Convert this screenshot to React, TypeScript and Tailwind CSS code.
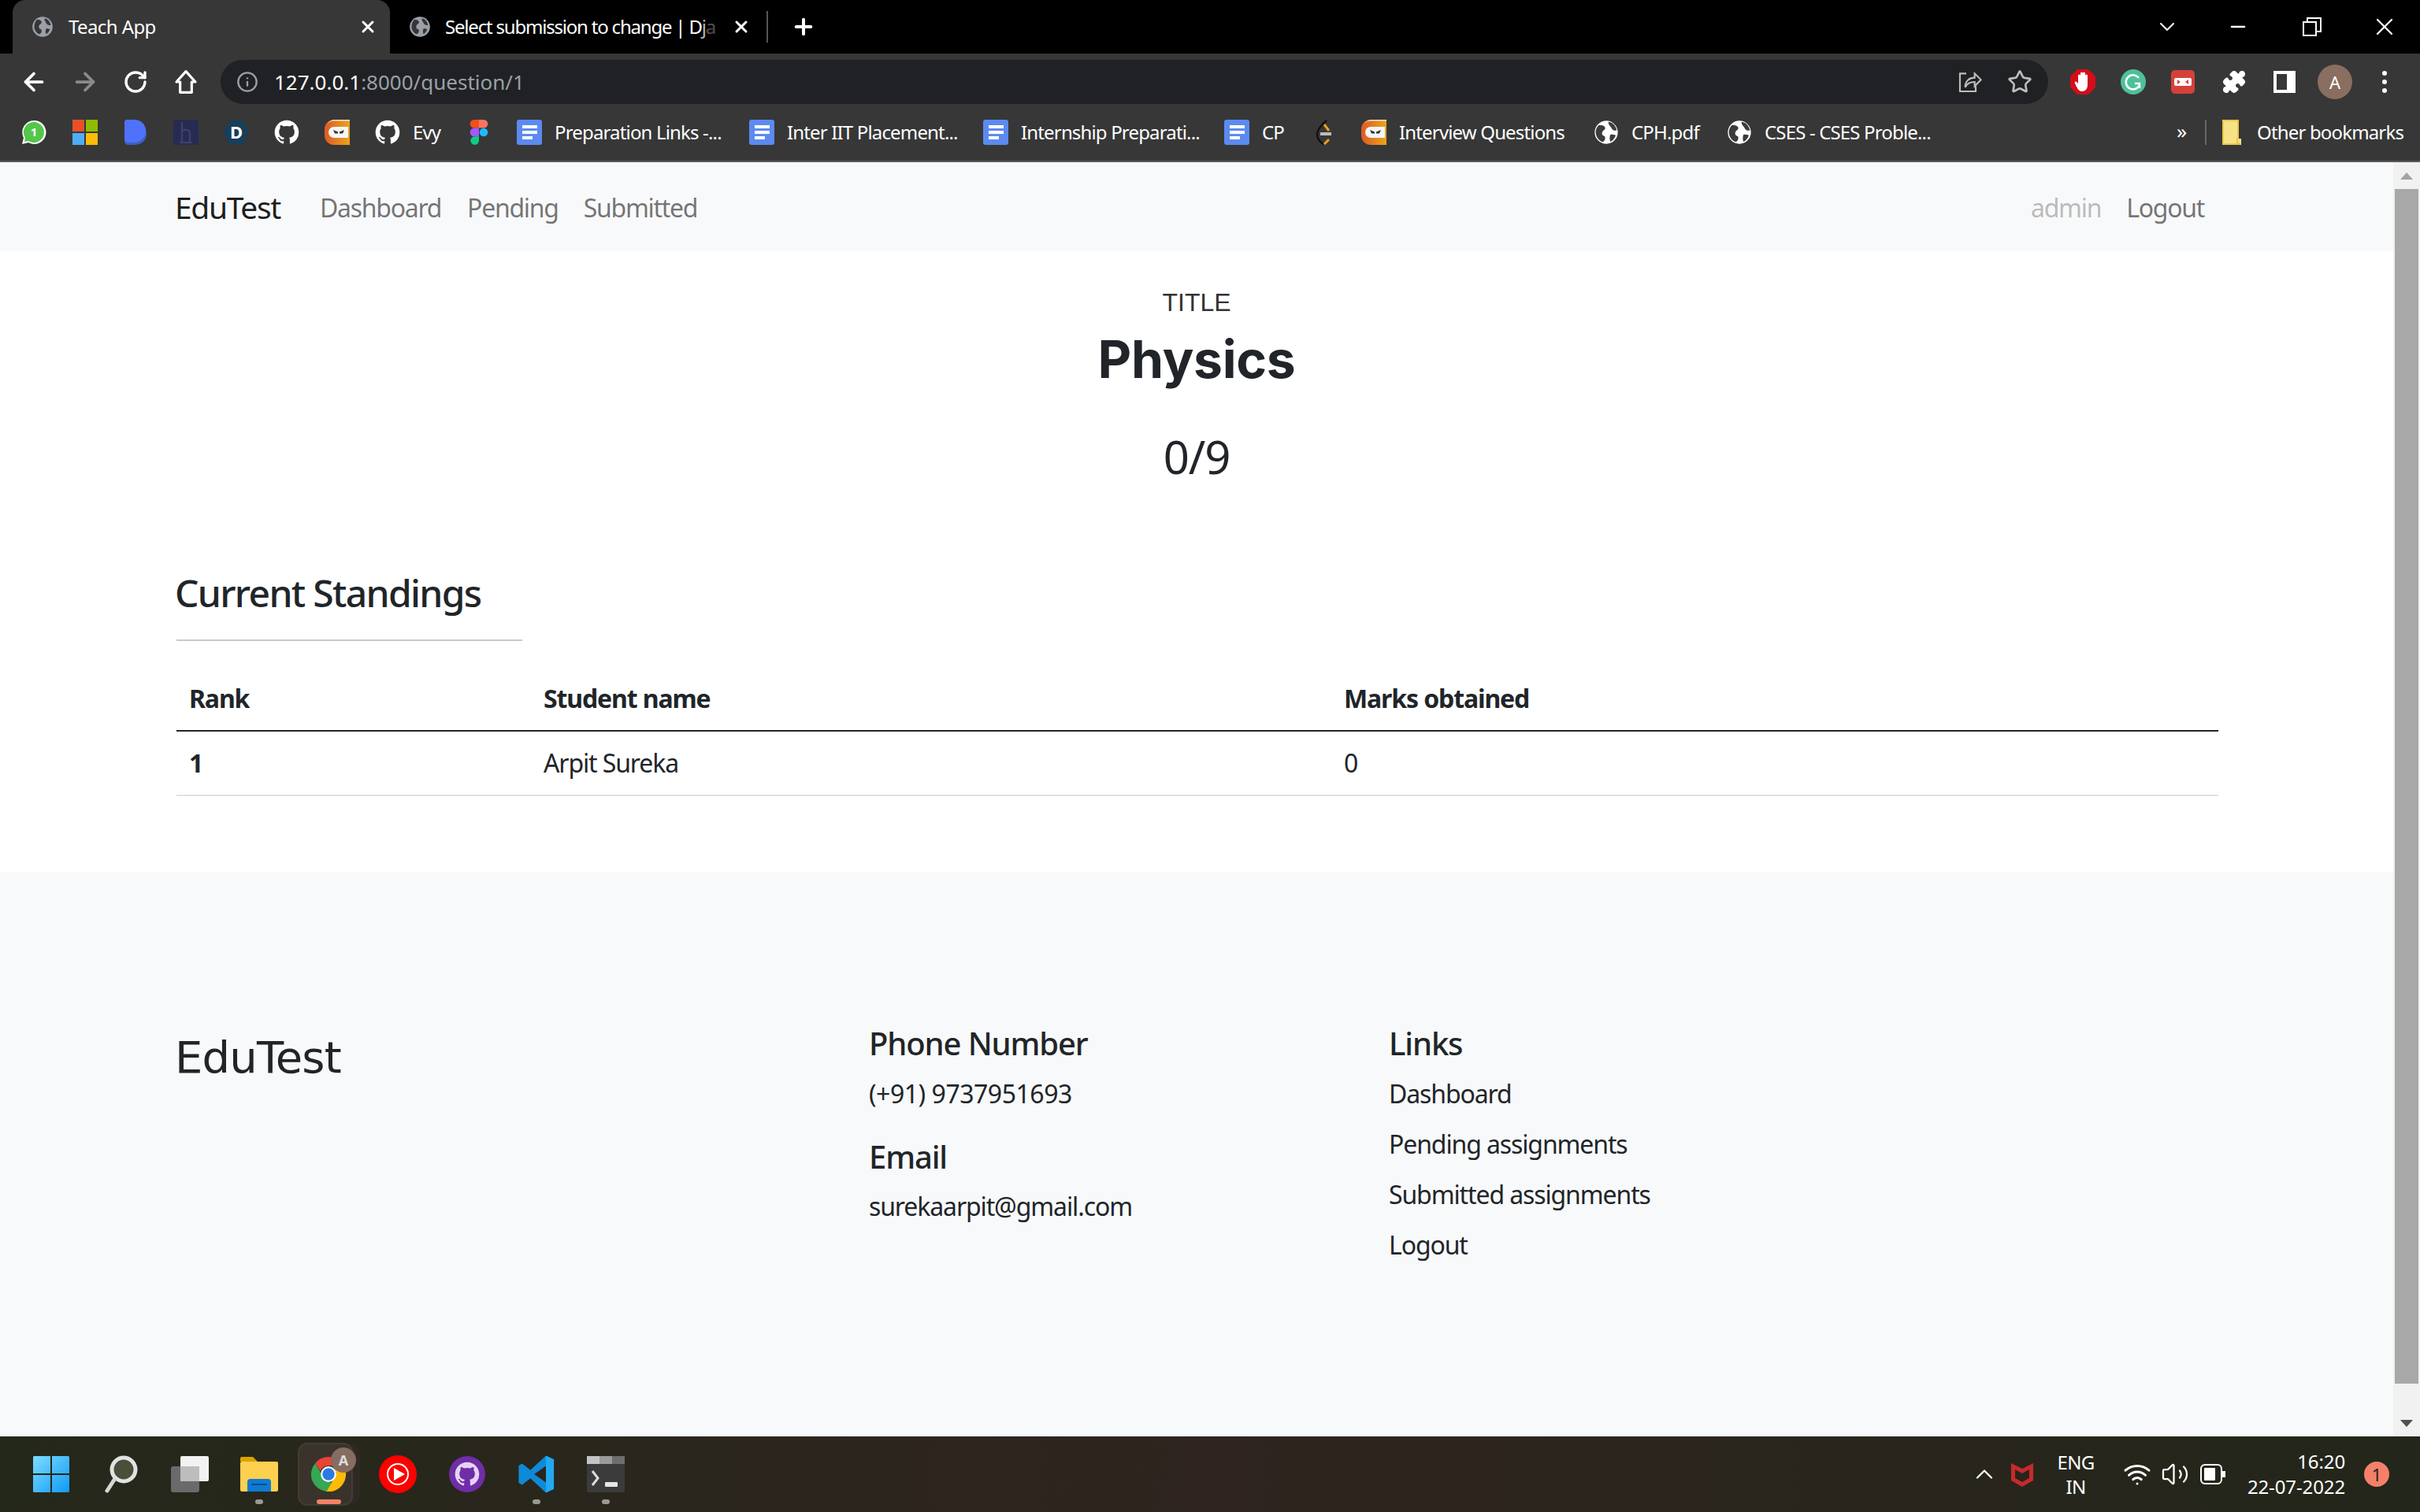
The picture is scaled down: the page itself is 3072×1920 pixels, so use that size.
import React from 'react';
import { ArrowLeft, ArrowRight, RotateCw, Info, Star, Plus, X, ChevronDown, ChevronUp, Minus, Puzzle, Wifi, Volume2 } from 'lucide-react';

const segoe = "font-['Noto_Sans','Open_Sans',sans-serif]";

const Globe = ({ className = 'w-8 h-8' }: { className?: string }) => (
  <svg className={className} viewBox="0 0 24 24">
    <circle cx="12" cy="12" r="11" fill="#fff" />
    <path d="M5 5c3 0 6 1 6 3s-3 2-3 5 3 2 3 4-1 4-3 4c-3-1-6-5-6-9 0-3 1-5 3-7zM14 2c3 0 7 3 8 8-2 1-4 0-5-2s-3-3-3-6zM16 14c2 0 4 0 5 1-1 3-3 5-5 6-1-2-1-5 0-7z" fill="#3c3c3c" />
  </svg>
);

const TabGlobe = () => (
  <svg className="w-7 h-7 shrink-0" viewBox="0 0 24 24">
    <circle cx="12" cy="12" r="11" fill="#9aa0a6" />
    <path d="M6 4c3 0 5 1 5 3s-3 2-3 5 3 2 3 4-1 4-3 4c-2-1-5-4-5-8 0-3 1-6 3-8zM14 3c3 0 6 3 7 7-2 1-4 0-5-2s-2-3-2-5zM16 14c2 0 3 0 4 1-1 2-2 4-4 5-1-2-1-4 0-6z" fill="#35363a" />
  </svg>
);

const Docs = () => (
  <svg className="w-8 h-8" viewBox="0 0 32 32">
    <rect x="0" y="0" width="32" height="32" rx="3" fill="#5c8af0" />
    <rect x="7" y="7" width="19" height="4" fill="#fff" />
    <rect x="7" y="14" width="19" height="4" fill="#fff" />
    <rect x="7" y="21" width="13" height="4" fill="#fff" />
  </svg>
);

const Github = ({ className = 'w-8 h-8', fill = '#fff' }: { className?: string; fill?: string }) => (
  <svg className={className} viewBox="0 0 24 24" fill={fill}>
    <path d="M12 .5C5.65.5.5 5.65.5 12c0 5.08 3.29 9.39 7.86 10.91.58.11.79-.25.79-.55v-2.14c-3.2.7-3.87-1.36-3.87-1.36-.52-1.33-1.28-1.68-1.28-1.68-1.05-.71.08-.7.08-.7 1.15.08 1.76 1.19 1.76 1.19 1.03 1.76 2.69 1.25 3.34.96.1-.74.4-1.25.73-1.54-2.55-.29-5.24-1.28-5.24-5.69 0-1.26.45-2.28 1.19-3.09-.12-.29-.52-1.46.11-3.05 0 0 .97-.31 3.17 1.18a11 11 0 0 1 5.76 0c2.2-1.49 3.17-1.18 3.17-1.18.63 1.59.23 2.76.11 3.05.74.81 1.19 1.83 1.19 3.09 0 4.42-2.69 5.39-5.25 5.68.41.36.78 1.06.78 2.14v3.17c0 .31.21.67.8.55A11.51 11.51 0 0 0 23.5 12C23.5 5.65 18.35.5 12 .5z" />
  </svg>
);

const Ninja = ({ id }: { id: string }) => (
  <svg className="w-8 h-8" viewBox="0 0 32 32">
    <defs>
      <linearGradient id={id} x1="0" y1="0" x2="1" y2="0">
        <stop offset="0" stopColor="#dd5a26" />
        <stop offset="1" stopColor="#eaa51c" />
      </linearGradient>
    </defs>
    <path d="M12 0h20v32H12A12 12 0 0 1 0 20v-8A12 12 0 0 1 12 0z" style={{ fill: `url(#${id})` }} />
    <path d="M12 0h20v1.500H12a11 11 0 0 0-8 3A12 12 0 0 1 12 0z" fill="#f3e2d2" />
    <path d="M30 9H12a6 6 0 0 0 0 14h18z" fill="#f6f6f6" />
    <path d="M11 13l6 2.500v2h-4zM25 13l-6 2.500v2h4z" fill="#333" />
  </svg>
);

const BookmarkItem = ({ icon, label, width }: { icon: React.ReactNode; label?: string; width: string }) => (
  <div className={`flex items-center shrink-0 ${width} pl-4 gap-[16px]`}>
    <span className="w-8 h-8 shrink-0 flex items-center justify-center">{icon}</span>
    {label && <span className="text-white text-[24px] leading-none whitespace-nowrap tracking-[-0.035em]">{label}</span>}
  </div>
);

const ChromeBar = () => (
  <div className={`shrink-0 ${segoe}`}>
    {/* tab strip */}
    <div className="h-[68px] bg-black flex items-end relative">
      <div className="ml-4 w-[479px] h-[68px] bg-[#373737] rounded-t-2xl flex items-center pl-6 pr-4 gap-[19px]">
        <TabGlobe />
        <span className="text-white text-[24px] flex-1 tracking-[-0.025em]">Teach App</span>
        <X className="w-6 h-6 text-white" strokeWidth={3} />
      </div>
      <div className="w-[478px] h-[68px] flex items-center pl-6 pr-[20px] gap-[18px]">
        <TabGlobe />
        <span className="text-white text-[24px] flex-1 whitespace-nowrap tracking-[-0.05em]">
          Select submission to change | D<span className="opacity-70">j</span><span className="opacity-30">a</span>
        </span>
        <X className="w-6 h-6 text-white shrink-0" strokeWidth={3} />
      </div>
      <div className="w-[2px] h-10 bg-[#555] mb-[14px]" />
      <div className="h-[68px] flex items-center pl-[29px]">
        <Plus className="w-8 h-8 text-white" strokeWidth={3} />
      </div>
      <div className="ml-auto h-[68px] flex items-center text-white">
        <ChevronDown className="w-8 h-8 mr-[60px]" strokeWidth={1.5} />
        <Minus className="w-7 h-7 mr-[68px]" strokeWidth={2} />
        <svg className="w-6 h-6 mr-[62px]" viewBox="0 0 24 24" fill="none" stroke="#fff" strokeWidth="2">
          <rect x="1" y="6" width="16" height="17" />
          <path d="M6 6V1h17v17h-6" />
        </svg>
        <X className="w-9 h-9 mr-[27px]" strokeWidth={1.5} />
      </div>
    </div>
    {/* toolbar */}
    <div className="h-[72px] bg-[#373737] flex items-center">
      <div className="w-[280px] shrink-0 flex items-center text-white">
        <ArrowLeft className="w-9 h-9 ml-[25px]" strokeWidth={2.5} />
        <ArrowRight className="w-9 h-9 ml-[29px] text-[#8b8b8b]" strokeWidth={2.5} />
        <RotateCw className="w-8 h-8 ml-[30px]" strokeWidth={2.5} />
        <svg className="w-8 h-8 ml-[32px]" viewBox="0 0 24 24" fill="none" stroke="#fff" strokeWidth="2.4" strokeLinejoin="round">
          <path d="M12 2L3 12h3.500v10h11V12H21z" />
        </svg>
      </div>
      <div className="w-[2320px] h-[56px] rounded-full bg-[#202124] flex items-center pl-5 pr-[20px]">
        <Info className="w-7 h-7 text-[#9aa0a6]" strokeWidth={2} />
        <span className="ml-[20px] text-[26px] text-white">127.0.0.1<span className="text-[#9aa0a6]">:8000/question/1</span></span>
        <svg className="ml-auto w-8 h-8" viewBox="0 0 24 24" fill="none" stroke="#bdbdbd" strokeWidth="1.6">
          <path d="M9 4H3v17h15v-5" />
          <path d="M8 17c0-6 4-9 9-9V4l6 6-6 6v-4c-4 0-7 1-9 5z" />
        </svg>
        <Star className="ml-[32px] w-8 h-8 text-[#bdbdbd]" strokeWidth={2} />
      </div>
      <div className="flex items-center flex-1">
        <svg className="ml-[28px] w-8 h-8" viewBox="0 0 32 32">
          <path d="M9 0h14l9 9v14l-9 9H9l-9-9V9z" fill="#d40d1a" />
          <path d="M10 14V8a1.500 1.500 0 0 1 3 0V5a1.500 1.500 0 0 1 3 0v0a1.500 1.500 0 0 1 3 0v3a1.500 1.500 0 0 1 3 0v12c0 5-3 8-7 8-3 0-5-2-6-4l-3-6c-1-2 1-3 2-2l2 2z" fill="#fff" />
        </svg>
        <svg className="ml-[32px] w-8 h-8" viewBox="0 0 32 32">
          <circle cx="16" cy="16" r="16" fill="#4fc09a" />
          <path d="M23 11a9 9 0 1 0 1 9M18 18h6v6" fill="none" stroke="#fff" strokeWidth="2.5" />
        </svg>
        <svg className="ml-[32px] w-[30px] h-[30px]" viewBox="0 0 30 30">
          <rect width="30" height="30" rx="5" fill="#d6403a" />
          <rect x="4" y="10" width="22" height="10" rx="2" fill="#fff" />
          <path d="M8 12l4 3-4 3zM18 15l4-3v6z" fill="#d6403a" />
        </svg>
        <Puzzle className="ml-[34px] w-8 h-8 text-white" fill="#fff" strokeWidth={1} />
        <svg className="ml-[34px] w-[28px] h-[28px]" viewBox="0 0 28 28">
          <path d="M0 0h28v28H0z" fill="#fff" />
          <rect x="4" y="4" width="13" height="20" fill="#373737" />
        </svg>
        <div className="ml-[28px] w-11 h-11 rounded-full bg-[#8a6e60] flex items-center justify-center text-white text-[22px]">A</div>
        <div className="ml-[38px] flex flex-col gap-[5px]">
          <span className="w-[6px] h-[6px] rounded-full bg-white" />
          <span className="w-[6px] h-[6px] rounded-full bg-white" />
          <span className="w-[6px] h-[6px] rounded-full bg-white" />
        </div>
      </div>
    </div>
    {/* bookmarks */}
    <div className="h-[66px] bg-[#373737] border-b-2 border-[#5a5a5a] flex items-center pl-[11px] pb-2">
      <BookmarkItem width="w-[65px]" icon={
        <svg className="w-8 h-8" viewBox="0 0 32 32">
          <path d="M16 1a15 15 0 0 0-13 22L1 31l8-2A15 15 0 1 0 16 1z" fill="#fff" />
          <path d="M16 3a13 13 0 0 0-11 20l-1 5 5-1A13 13 0 1 0 16 3z" fill="#52c748" />
          <text x="16" y="21" textAnchor="middle" fontSize="15" fontWeight="700" fill="#fff">1</text>
        </svg>
      } />
      <BookmarkItem width="w-[64px]" icon={
        <div className="grid grid-cols-2 gap-[2px] w-8 h-8">
          <span className="bg-[#e8502a]" /><span className="bg-[#8fbb00]" /><span className="bg-[#4fadf5]" /><span className="bg-[#fcbc05]" />
        </div>
      } />
      <BookmarkItem width="w-[64px]" icon={
        <svg className="w-8 h-8" viewBox="0 0 32 32">
          <path d="M2 3h12c9 0 16 6 16 15s-7 14-16 14H7c-3 0-5-2-5-5z" fill="#3f5fc2" />
          <path d="M4 0h10c9 0 15 6 15 14s-6 15-15 15H7c-3 0-5-2-5-5V2z" fill="#4f72fb" />
        </svg>
      } />
      <BookmarkItem width="w-[64px]" icon={
        <svg className="w-8 h-8" viewBox="0 0 32 32">
          <rect width="32" height="32" rx="2" fill="#272b52" />
          <path d="M11 3v26M8 29h16M11 15c2-3 9-3 10 1v13" fill="none" stroke="#3a3f6e" strokeWidth="2.500" />
        </svg>
      } />
      <BookmarkItem width="w-[64px]" icon={
        <svg className="w-8 h-8" viewBox="0 0 32 32">
          <path d="M8 1h16l8 15-8 15H8L0 16z" fill="#163f5c" />
          <text x="16" y="24" textAnchor="middle" fontSize="22" fontWeight="700" fill="#fff">D</text>
        </svg>
      } />
      <BookmarkItem width="w-[64px]" icon={<Github />} />
      <BookmarkItem width="w-[64px]" icon={<Ninja id="ninja-a" />} />
      <BookmarkItem width="w-[116px]" icon={<Github />} label="Evy" />
      <BookmarkItem width="w-[64px]" icon={
        <svg className="w-6 h-8" viewBox="0 0 24 32">
          <path d="M6 0h6v10.600H6a5.300 5.300 0 0 1 0-10.600z" fill="#f24e1e" />
          <path d="M12 0h6a5.300 5.300 0 0 1 0 10.600h-6z" fill="#ff7262" />
          <path d="M6 10.600h6v10.600H6a5.300 5.300 0 0 1 0-10.600z" fill="#a259ff" />
          <circle cx="18" cy="16" r="5.300" fill="#1abcfe" />
          <path d="M6 21.300h6v5.300a5.300 5.300 0 1 1-6-5.300z" fill="#0acf83" />
        </svg>
      } />
      <BookmarkItem width="w-[295px]" icon={<Docs />} label="Preparation Links -..." />
      <BookmarkItem width="w-[297px]" icon={<Docs />} label="Inter IIT Placement..." />
      <BookmarkItem width="w-[306px]" icon={<Docs />} label="Internship Preparati..." />
      <BookmarkItem width="w-[110px]" icon={<Docs />} label="CP" />
      <BookmarkItem width="w-[64px]" icon={
        <svg className="w-8 h-8" viewBox="0 0 32 32" fill="none">
          <path d="M20 1C12 8 8 13 8 18c0 5 3 10 8 13" stroke="#111" strokeWidth="2.500" />
          <path d="M17 6l6 8M17 31l6-6" stroke="#eda01b" strokeWidth="3" />
          <rect x="12" y="16" width="14" height="4" fill="#bbb" />
        </svg>
      } />
      <BookmarkItem width="w-[295px]" icon={<Ninja id="ninja-b" />} label="Interview Questions" />
      <BookmarkItem width="w-[169px]" icon={<Globe />} label="CPH.pdf" />
      <BookmarkItem width="w-[587px]" icon={<Globe />} label="CSES - CSES Proble..." />
      <span className="w-[36px] text-white text-[26px] leading-none pb-1 shrink-0">»</span>
      <div className="w-[2px] h-8 bg-[#666] shrink-0" />
      <BookmarkItem width="w-[273px]" icon={
        <svg className="w-6 h-8" viewBox="0 0 24 32">
          <path d="M0 0h21v24l3 0v8H0z" fill="#f7e285" />
          <path d="M1 1h19v23h-1v6h4M1 1v30h22" fill="none" stroke="#e8c84a" strokeWidth="2" />
        </svg>
      } label="Other bookmarks" />
    </div>
  </div>
);

const Scrollbar = () => (
  <div className="w-[34px] shrink-0 bg-[#f1f1f1] flex flex-col items-center">
    <div className="h-[34px] flex items-center justify-center shrink-0">
      <div className="w-0 h-0 border-l-[8px] border-r-[8px] border-b-[9px] border-l-transparent border-r-transparent border-b-[#a3a3a3]" />
    </div>
    <div className="w-[30px] h-[1517px] bg-[#a8a8a8]" />
    <div className="mt-auto h-[34px] flex items-center justify-center shrink-0">
      <div className="w-0 h-0 border-l-[8px] border-r-[8px] border-t-[9px] border-l-transparent border-r-transparent border-t-[#505050]" />
    </div>
  </div>
);

const Page = () => (
  <div className={`flex-1 min-h-0 flex ${segoe} text-[#212529]`}>
    <div className="flex-1 flex flex-col min-w-0">
      <nav className="h-[112px] shrink-0 bg-[#f8f9fa] pl-[222px] pr-[224px] pt-[3px] flex items-center text-[32px] tracking-[-0.04em] text-[#0000008c]">
        <span className="text-[39px] text-[#000000e6] mr-[50px] tracking-[-0.035em]">EduTest</span>
        <span className="mr-[33px]">Dashboard</span>
        <span className="mr-[32px]">Pending</span>
        <span>Submitted</span>
        <span className="ml-auto text-[#00000045] mr-[32px]">admin</span>
        <span className="mr-[16px]">Logout</span>
      </nav>
      <main className="h-[789px] shrink-0 bg-white pl-[222px]">
        <div className="flex flex-col items-center pr-[222px]">
          <div className="mt-[46px] font-['Liberation_Sans',sans-serif] text-[32px] leading-[40px] text-[#333]">TITLE</div>
          <h1 className="mt-[12px] font-['Inter',sans-serif] font-bold text-[66px] leading-[80px] tracking-[-0.005em]">Physics</h1>
          <div className="mt-[44px] text-[58px] leading-[80px] tracking-[-0.02em]">0/9</div>
        </div>
        <h3 className="mt-[101px] text-[48px] leading-[64px] font-medium tracking-[-0.035em]">Current Standings</h3>
        <div className="ml-[2px] mt-[27px] h-[2px] w-[439px] bg-[#c9c9c9]" />
        <table className="ml-[2px] mt-[36px] w-[2592px] table-fixed text-[32px] tracking-[-0.035em]">
          <thead>
            <tr className="border-b-2 border-[#212529]">
              <th className="w-[450px] h-[78px] pl-4 pb-1 text-left font-bold">Rank</th>
              <th className="w-[1016px] pl-4 pb-1 text-left font-bold">Student name</th>
              <th className="pl-4 pb-1 text-left font-bold">Marks obtained</th>
            </tr>
          </thead>
          <tbody>
            <tr className="border-b-2 border-[#dee2e6]">
              <td className="h-[82px] pl-4 font-bold">1</td>
              <td className="pl-4">Arpit Sureka</td>
              <td className="pl-4">0</td>
            </tr>
          </tbody>
        </table>
      </main>
      <footer className="flex-1 bg-[#f8f9fa] pl-[222px] pt-[188px] flex items-start">
        <div className="w-[881px] shrink-0 pt-[12px] text-[56px] leading-[72px] font-['DejaVu_Sans',sans-serif] tracking-[-0.015em]">EduTest</div>
        <div className="w-[660px] shrink-0 text-[32px] tracking-[-0.035em]">
          <h5 className="text-[40px] leading-[60px] font-medium">Phone Number</h5>
          <p className="mt-[2px] leading-[64px] tracking-[-0.015em]">(+91) 9737951693</p>
          <h5 className="mt-[18px] text-[40px] leading-[60px] font-medium">Email</h5>
          <p className="mt-[1px] leading-[64px]">surekaarpit@gmail.com</p>
        </div>
        <div className="text-[32px] tracking-[-0.035em]">
          <h5 className="text-[40px] leading-[60px] font-medium">Links</h5>
          <p className="mt-[2px] leading-[64px]">Dashboard</p>
          <p className="leading-[64px]">Pending assignments</p>
          <p className="leading-[64px]">Submitted assignments</p>
          <p className="leading-[64px]">Logout</p>
        </div>
      </footer>
    </div>
    <Scrollbar />
  </div>
);

const TaskbarSlot = ({ children, width = 'w-[88px]' }: { children: React.ReactNode; width?: string }) => (
  <div className={`${width} h-full shrink-0 flex items-center justify-center relative`}>{children}</div>
);

const Dot = () => <span className="absolute bottom-[10px] w-[10px] h-[6px] rounded-full bg-[#9a9a92]" />;

const Taskbar = () => (
  <div className={`h-[96px] shrink-0 flex items-center text-white ${segoe} bg-gradient-to-r from-[#24281a] via-[#2f241f] to-[#23261a]`}>
    <div className="flex items-center h-full pl-[21px]">
      <TaskbarSlot>
        <svg className="w-[46px] h-[46px]" viewBox="0 0 46 46">
          <defs><linearGradient id="win" x1="0" y1="0" x2="1" y2="1"><stop offset="0" stopColor="#7ddcff" /><stop offset="1" stopColor="#0f9af5" /></linearGradient></defs>
          <path d="M1 0h21v22H0V1zM24 0h21l1 1v21H24zM0 24h22v22H1l-1-1zM24 24h22v21l-1 1H24z" fill="url(#win)" />
        </svg>
      </TaskbarSlot>
      <TaskbarSlot>
        <svg className="w-11 h-12" viewBox="0 0 44 48" fill="none">
          <circle cx="26" cy="18" r="15" fill="#4a4f3c" stroke="#e1e3e3" strokeWidth="5" />
          <path d="M14 31L5 45" stroke="#d5d7d7" strokeWidth="5" strokeLinecap="round" />
        </svg>
      </TaskbarSlot>
      <TaskbarSlot>
        <svg className="w-12 h-[46px]" viewBox="0 0 48 46">
          <rect x="12" y="0" width="36" height="32" rx="2" fill="#f2f2f2" />
          <rect x="0" y="13" width="36" height="33" rx="3" fill="#6a6a6a" />
          <rect x="12" y="13" width="24" height="19" fill="#bdbdbd" />
        </svg>
      </TaskbarSlot>
      <TaskbarSlot>
        <svg className="w-12 h-[44px]" viewBox="0 0 48 44">
          <path d="M0 2a2 2 0 0 1 2-2h14l6 6h-22z" fill="#dba300" />
          <rect x="0" y="6" width="48" height="38" rx="2" fill="#fdd04f" />
          <path d="M9 44V32a4 4 0 0 1 4-4h22a4 4 0 0 1 4 4v12z" fill="#0f7bd1" />
          <rect x="14" y="34" width="20" height="2" fill="#0a4f8d" />
        </svg>
        <Dot />
      </TaskbarSlot>
      <TaskbarSlot>
        <div className="absolute left-[12px] top-[10px] w-[72px] h-[76px] rounded-xl bg-[#2e2a23]" />
        <div className="absolute left-[5px] top-[8px] w-[70px] h-[80px] rounded-xl bg-[#3a332c] border-2 border-[#423c34]" />
        <svg className="w-[44px] h-[44px] relative" viewBox="0 0 24 24">
          <path d="M12 0a12 12 0 0 1 10.400 6H12a6 6 0 0 0-5.600 3.800L2.800 4.300A12 12 0 0 1 12 0z" fill="#ea4335" />
          <path d="M2.800 4.300l5.200 9a6 6 0 0 0 6 4.400L10.500 24A12 12 0 0 1 2.800 4.300z" fill="#34a853" />
          <path d="M22.400 6A12 12 0 0 1 10.500 24l5.200-9A6 6 0 0 0 16 8z" fill="#fbbc05" />
          <circle cx="12" cy="12" r="4.800" fill="#2a7ae4" stroke="#fff" strokeWidth="1.200" />
        </svg>
        <div className="absolute left-[47px] top-[14px] w-8 h-8 rounded-full bg-[#866c61] flex items-center justify-center text-[18px] text-[#ddd] font-bold">A</div>
        <span className="absolute bottom-[10px] left-[29px] w-[31px] h-[6px] rounded-full bg-[#f28268]" />
      </TaskbarSlot>
      <TaskbarSlot>
        <svg className="w-12 h-12" viewBox="0 0 48 48">
          <circle cx="24" cy="24" r="24" fill="#ff0000" />
          <circle cx="24" cy="24" r="13" fill="none" stroke="#fff" strokeWidth="2" />
          <path d="M19 16l14 8-14 8z" fill="#fff" />
        </svg>
      </TaskbarSlot>
      <TaskbarSlot>
        <div className="w-[46px] h-[46px] rounded-full bg-[#6f2da8] flex items-center justify-center">
          <Github className="w-8 h-8" fill="#e6d4f2" />
        </div>
      </TaskbarSlot>
      <TaskbarSlot>
        <svg className="w-12 h-12" viewBox="0 0 100 100">
          <path d="M96 11L75 1 34 39 12 22l-9 5v46l9 5 22-17 41 38 21-10V11zM75 72L44 50l31-22z" fill="#0f8ad8" />
          <path d="M75 1l21 10v78l-21 10z" fill="#23a8f2" />
        </svg>
        <Dot />
      </TaskbarSlot>
      <TaskbarSlot>
        <svg className="w-12 h-[46px]" viewBox="0 0 48 46">
          <rect width="48" height="46" rx="2" fill="#3b3b3b" />
          <rect width="16" height="10" fill="#c4c4c4" />
          <rect x="16" width="16" height="10" fill="#9b9b9b" />
          <rect x="32" width="16" height="10" fill="#6e6e6e" />
          <path d="M7 19l7 9-7 9" fill="none" stroke="#dcdcdc" strokeWidth="3" />
          <rect x="23" y="33" width="16" height="6" rx="1" fill="#e6e6e6" />
        </svg>
        <Dot />
      </TaskbarSlot>
    </div>
    <div className="ml-auto flex items-center h-full">
      <ChevronUp className="w-9 h-9 text-white" strokeWidth={1.5} />
      <svg className="ml-[16px] w-7 h-8" viewBox="0 0 28 32">
        <path d="M0 2l14 7 14-7v22l-14 8-14-8zM5 10v11l9 5 9-5V10l-9 5z" fill="#c8292b" />
      </svg>
      <div className="ml-[26px] w-[56px] text-center text-[24px] leading-[31px] tracking-[-0.03em]">
        <div>ENG</div>
        <div>IN</div>
      </div>
      <Wifi className="ml-[32px] w-9 h-9" strokeWidth={2} />
      <Volume2 className="ml-[12px] w-9 h-9" strokeWidth={1.5} />
      <svg className="ml-[14px] w-8 h-7" viewBox="0 0 32 26" fill="none">
        <rect x="1" y="1" width="26" height="24" rx="5" stroke="#fff" strokeWidth="2" />
        <rect x="5" y="5" width="14" height="16" rx="1" fill="#fff" />
        <rect x="28" y="9" width="4" height="8" fill="#fff" />
      </svg>
      <div className="ml-[24px] w-[128px] text-right text-[24px] leading-[32px] tracking-[-0.005em]">
        <div>16:20</div>
        <div className="whitespace-nowrap">22-07-2022</div>
      </div>
      <div className="ml-6 mr-[39px] w-8 h-8 rounded-full bg-[#f58069] text-[#222] text-[22px] flex items-center justify-center">1</div>
    </div>
  </div>
);

export default function App() {
  return (
    <div className="w-[3072px] h-[1920px] flex flex-col overflow-hidden">
      <ChromeBar />
      <Page />
      <Taskbar />
    </div>
  );
}
